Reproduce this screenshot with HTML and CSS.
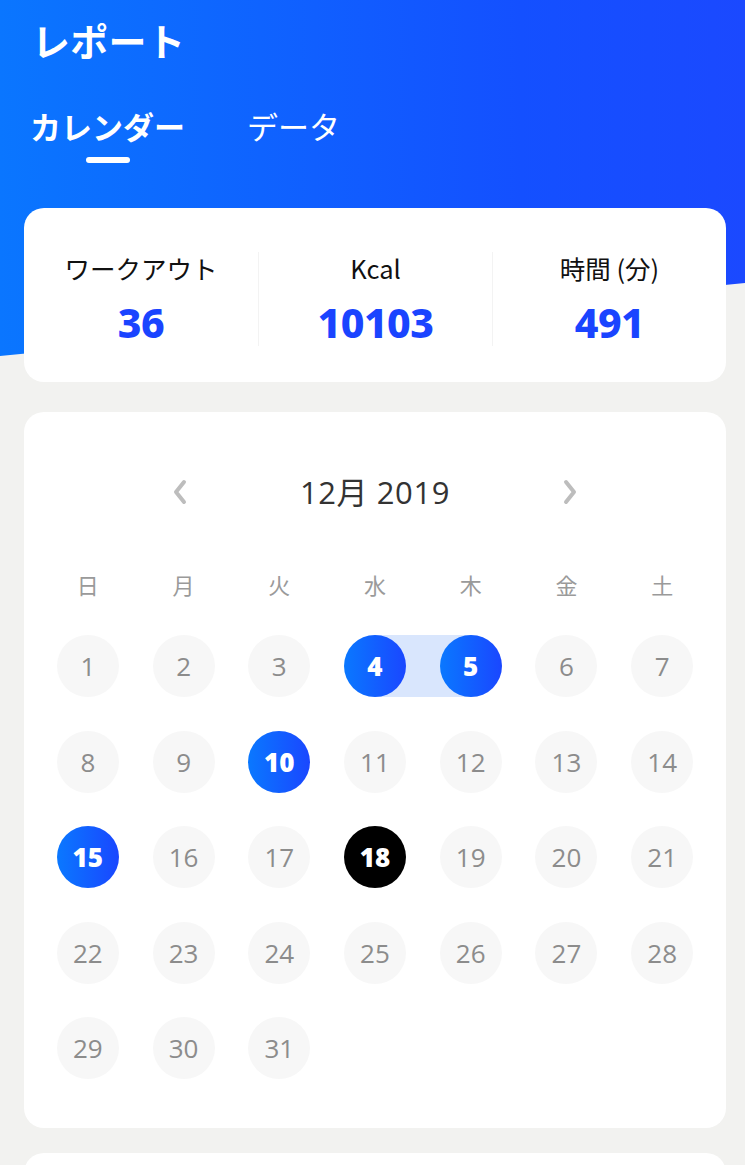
FILE: index.html
```html
<!DOCTYPE html>
<html lang="ja">
<head>
<meta charset="utf-8">
<title>レポート</title>
<link rel="stylesheet" href="styles.css">
</head>
<body>
<div class="page">
  <div class="hero">
    <h1 class="title">レポート</h1>
    <nav class="tabs">
      <div class="tab active">カレンダー</div>
      <div class="tab">データ</div>
    </nav>
    <section class="card stats">
      <div class="stat">
        <div class="stat-label">ワークアウト</div>
        <div class="stat-value">36</div>
      </div>
      <div class="stat">
        <div class="stat-label">Kcal</div>
        <div class="stat-value">10103</div>
      </div>
      <div class="stat">
        <div class="stat-label">時間 (分)</div>
        <div class="stat-value">491</div>
      </div>
    </section>
  </div>

  <section class="card calendar">
    <div class="month-bar">
      <svg class="chev" width="16" height="26" viewBox="0 0 16 26"><polyline points="12,3 4,13 12,23" fill="none" stroke="#bdbdbd" stroke-width="4" stroke-linecap="round" stroke-linejoin="round"/></svg>
      <div class="month">12月 2019</div>
      <svg class="chev" width="16" height="26" viewBox="0 0 16 26"><polyline points="4,3 12,13 4,23" fill="none" stroke="#bdbdbd" stroke-width="4" stroke-linecap="round" stroke-linejoin="round"/></svg>
    </div>
    <div class="weekdays">
      <div>日</div><div>月</div><div>火</div><div>水</div><div>木</div><div>金</div><div>土</div>
    </div>
    <div class="days">
      <div class="cell"><span class="day">1</span></div>
      <div class="cell"><span class="day">2</span></div>
      <div class="cell"><span class="day">3</span></div>
      <div class="cell range-start"><span class="day sel">4</span></div>
      <div class="cell range-end"><span class="day sel">5</span></div>
      <div class="cell"><span class="day">6</span></div>
      <div class="cell"><span class="day">7</span></div>
      <div class="cell"><span class="day">8</span></div>
      <div class="cell"><span class="day">9</span></div>
      <div class="cell"><span class="day sel">10</span></div>
      <div class="cell"><span class="day">11</span></div>
      <div class="cell"><span class="day">12</span></div>
      <div class="cell"><span class="day">13</span></div>
      <div class="cell"><span class="day">14</span></div>
      <div class="cell"><span class="day sel">15</span></div>
      <div class="cell"><span class="day">16</span></div>
      <div class="cell"><span class="day">17</span></div>
      <div class="cell"><span class="day today">18</span></div>
      <div class="cell"><span class="day">19</span></div>
      <div class="cell"><span class="day">20</span></div>
      <div class="cell"><span class="day">21</span></div>
      <div class="cell"><span class="day">22</span></div>
      <div class="cell"><span class="day">23</span></div>
      <div class="cell"><span class="day">24</span></div>
      <div class="cell"><span class="day">25</span></div>
      <div class="cell"><span class="day">26</span></div>
      <div class="cell"><span class="day">27</span></div>
      <div class="cell"><span class="day">28</span></div>
      <div class="cell"><span class="day">29</span></div>
      <div class="cell"><span class="day">30</span></div>
      <div class="cell"><span class="day">31</span></div>
    </div>
  </section>

  <section class="card next"></section>
</div>
</body>
</html>
```

FILE: styles.css
```css
* { box-sizing: border-box; }

body {
  margin: 0;
  background: #f2f2f0;
  font-family: "Noto Sans CJK JP", "Noto Sans", sans-serif;
  overflow: hidden;
}

.page {
  width: 745px;
  height: 1165px;
  padding: 0 19px 0 24px;
}

.hero {
  position: relative;
  padding-top: 14px;
}

.hero::before {
  content: "";
  position: absolute;
  top: 0;
  left: -24px;
  width: 745px;
  height: 356px;
  background: linear-gradient(90deg, #0a76ff 0%, #1450ff 70%, #1b49ff 100%);
  clip-path: polygon(0 0, 100% 0, 100% 283px, 0 356px);
  z-index: 0;
}

.title {
  position: relative;
  margin: 0 0 0 8px;
  font-size: 38px;
  line-height: 52px;
  font-weight: 700;
  color: #fff;
  letter-spacing: 0.3px;
}

.tabs {
  position: relative;
  display: flex;
  gap: 62px;
  margin-top: 38px;
  margin-left: 6px;
}

.tab {
  position: relative;
  font-size: 31px;
  line-height: 44px;
  color: #fff;
  font-weight: 400;
}

.tab.active {
  font-weight: 700;
}

.tab.active::after {
  content: "";
  position: absolute;
  left: 50%;
  top: 53px;
  width: 44px;
  height: 6px;
  margin-left: -22px;
  border-radius: 3px;
  background: #fff;
}

.card {
  position: relative;
  background: #fff;
  border-radius: 20px;
  width: 702px;
}

.stats {
  margin-top: 60px;
  display: grid;
  grid-template-columns: repeat(3, 1fr);
  height: 174px;
  padding: 44px 0 0;
}

.stat {
  text-align: center;
  height: 94px;
}

.stat + .stat {
  border-left: 1px solid #f3f3f3;
}

.stat-label {
  font-size: 25.5px;
  line-height: 32px;
  color: #111;
  font-weight: 400;
}

.stat-value {
  margin-top: 14px;
  font-family: "Noto Sans", "Open Sans", sans-serif;
  font-size: 41px;
  line-height: 48px;
  font-weight: 800;
  color: #1a44ff;
  letter-spacing: -0.5px;
}

.calendar {
  margin-top: 30px;
  height: 716px;
  padding: 56px 16px 0;
}

.month-bar {
  display: flex;
  justify-content: center;
  align-items: center;
  gap: 112px;
  height: 48px;
}

.chev { display: block; }

.month {
  font-family: "Open Sans", "Noto Sans CJK JP", sans-serif;
  font-size: 31px;
  letter-spacing: 0.6px;
  color: #333;
  line-height: 48px;
}

.weekdays {
  margin-top: 53px;
  display: grid;
  grid-template-columns: repeat(7, 1fr);
  text-align: center;
  font-size: 22px;
  line-height: 30px;
  color: #9a9a9a;
}

.days {
  margin-top: 36px;
  display: grid;
  grid-template-columns: repeat(7, 1fr);
  row-gap: 33.5px;
}

.cell {
  position: relative;
  display: flex;
  justify-content: center;
  height: 62px;
}

.range-start::before,
.range-end::before {
  content: "";
  position: absolute;
  top: 0;
  height: 62px;
  background: #d9e6fd;
}

.range-start::before { left: 50%; right: 0; }
.range-end::before { left: 0; right: 50%; }

.day {
  position: relative;
  width: 62px;
  height: 62px;
  border-radius: 50%;
  background: #f7f7f7;
  display: flex;
  align-items: center;
  justify-content: center;
  font-family: "Open Sans", sans-serif;
  font-size: 26px;
  color: #8c8c8c;
}

.day.sel {
  background: linear-gradient(90deg, #0a78ff 0%, #1a47ff 100%);
  color: #fff;
  font-weight: 800;
}

.day.today {
  background: #000;
  color: #fff;
  font-weight: 800;
}

.next {
  margin-top: 25px;
  height: 60px;
}
```
